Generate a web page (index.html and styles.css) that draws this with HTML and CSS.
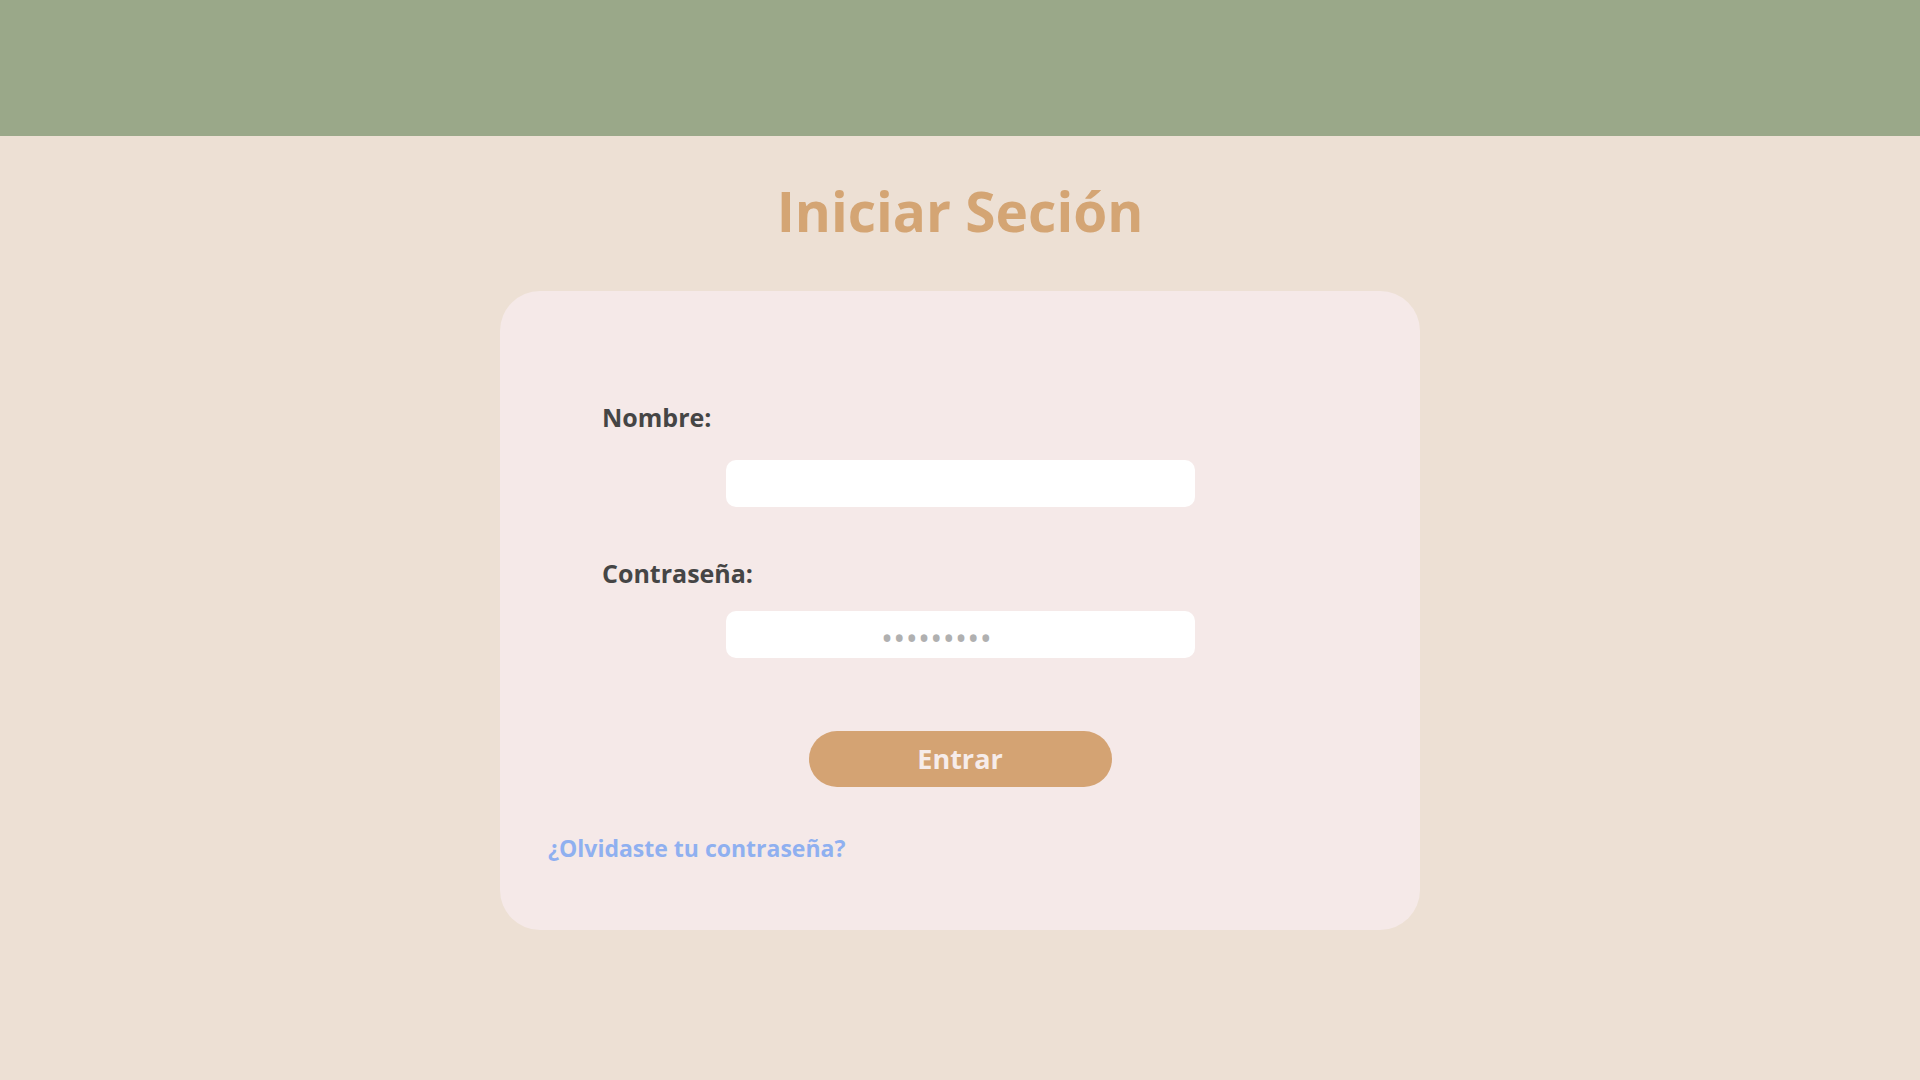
FILE: index.html
```html
<!DOCTYPE html>
<html lang="es">
<head>
<meta charset="utf-8">
<title>Iniciar Sesión</title>
<link rel="stylesheet" href="styles.css">
</head>
<body>
<header class="topbar"></header>
<main class="page">
  <h1 class="title">Iniciar Seción</h1>
  <form class="card">
    <label class="label label-name" for="nombre">Nombre:</label>
    <input class="field field-name" id="nombre" type="text">
    <label class="label label-pass" for="pass">Contraseña:</label>
    <input class="field field-pass" id="pass" type="password" placeholder="•••••••••">
    <button class="btn" type="button">Entrar</button>
    <a class="forgot" href="#">¿Olvidaste tu contraseña?</a>
  </form>
</main>
</body>
</html>
```
FILE: styles.css
```css
html, body {
  margin: 0;
  padding: 0;
}
body {
  background: #ede0d4;
  font-family: "Open Sans", "Noto Sans", sans-serif;
  min-height: 1080px;
}
.topbar {
  height: 136px;
  background: #9aa889;
}
.page {
  display: flex;
  flex-direction: column;
  align-items: center;
}
.title {
  margin: 42px 0 47px;
  font-size: 55px;
  line-height: 66px;
  font-weight: 700;
  color: #d4a574;
}
.card {
  box-sizing: border-box;
  width: 920px;
  height: 639px;
  background: #f5e9e8;
  border-radius: 40px;
  padding: 110px 0 0 0;
  display: flex;
  flex-direction: column;
}
.label {
  margin-left: 102px;
  font-size: 25px;
  line-height: 32px;
  font-weight: 700;
  color: #454545;
}
.label-name { margin-bottom: 27px; }
.label-pass { margin-top: 50px; margin-bottom: 22px; }
.field {
  align-self: center;
  box-sizing: border-box;
  width: 469px;
  height: 47px;
  margin-left: 1px;
  border: none;
  border-radius: 10px;
  background: #ffffff;
  outline: none;
  font-family: inherit;
}
.field-pass {
  text-align: center;
  padding: 5px 48px 0 0;
  font-size: 32px;
  letter-spacing: 0.3px;
}
.field-pass::placeholder {
  color: #b0b0b0;
}
.btn {
  align-self: center;
  margin-top: 73px;
  width: 303px;
  height: 56px;
  border: none;
  border-radius: 28px;
  background: #d4a373;
  color: #f6ecea;
  font-family: inherit;
  font-size: 27px;
  font-weight: 700;
  line-height: 56px;
  padding: 0;
}
.forgot {
  margin: 46px 0 0 48px;
  align-self: flex-start;
  font-size: 23px;
  line-height: 30px;
  font-weight: 700;
  color: #8fb0f0;
  text-decoration: none;
}
```
